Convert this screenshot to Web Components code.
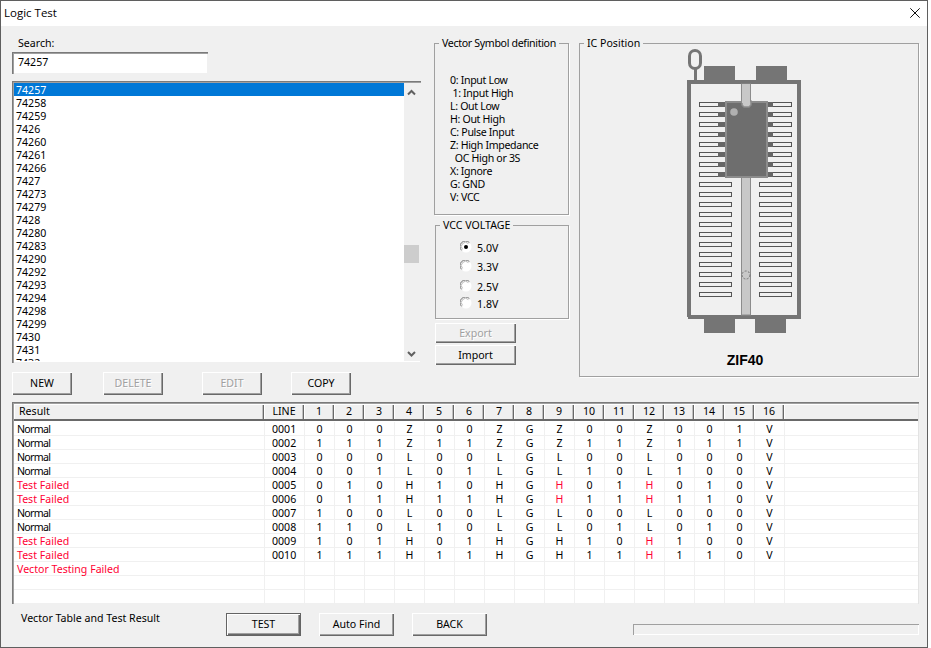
<!DOCTYPE html>
<html lang="en">
<head>
<meta charset="utf-8">
<title>Logic Test</title>
<style>
  html, body { margin: 0; background: #fff; }
  body { font: 10.6px/14px "Noto Sans", "Liberation Sans", Arial, sans-serif; color: #000; }
</style>
</head>
<body>
<logic-window>
  <title-bar slot="title">Logic Test</title-bar>

  <div slot="search">
    <sunken-input label="Search:">74257</sunken-input>
  </div>
  <chip-list slot="list"></chip-list>
  <win-button slot="actions" style="width:60px">NEW</win-button>
  <win-button slot="actions" disabled style="width:60px;margin-left:31px">DELETE</win-button>
  <win-button slot="actions" disabled style="width:60px;margin-left:39px">EDIT</win-button>
  <win-button slot="actions" style="width:60px;margin-left:29px">COPY</win-button>

  <group-box slot="middle" label="Vector Symbol definition" style="height:179px;letter-spacing:-.33px">
    <symbol-list>
      <div>0: Input Low</div>
      <div> 1: Input High</div>
      <div>L: Out Low</div>
      <div>H: Out High</div>
      <div>C: Pulse Input</div>
      <div>Z: High Impedance</div>
      <div>  OC High or 3S</div>
      <div>X: Ignore</div>
      <div>G: GND</div>
      <div>V: VCC</div>
    </symbol-list>
  </group-box>
  <group-box slot="middle" label="VCC VOLTAGE" style="width:134px;height:101px;margin:3px 0 0 1px">
    <radio-option checked style="margin-top:9px">5.0V</radio-option>
    <radio-option style="margin-top:5px">3.3V</radio-option>
    <radio-option style="margin-top:6px">2.5V</radio-option>
    <radio-option style="margin-top:3px">1.8V</radio-option>
  </group-box>
  <win-button slot="middle" disabled style="width:81px;height:20px;padding-bottom:1px;margin:4px 0 0 1px">Export</win-button>
  <win-button slot="middle" style="width:81px;height:20px;padding-bottom:1px;margin:2px 0 0 1px">Import</win-button>

  <group-box slot="position" label="IC Position" style="width:340px;height:341px">
    <zif-socket>ZIF40</zif-socket>
  </group-box>

  <vector-table slot="table"></vector-table>

  <span slot="caption">Vector Table and Test Result</span>
  <win-button slot="commands" default style="width:75px">TEST</win-button>
  <win-button slot="commands" style="width:75px;margin-left:18px">Auto Find</win-button>
  <win-button slot="commands" style="width:75px;margin-left:18px">BACK</win-button>
  <progress-strip slot="progress"></progress-strip>
</logic-window>

<script>
// every element gets an open shadow root filled from one template
function makeTemplate(html) {
  const tmpl = document.createElement("template");
  tmpl.innerHTML = html;
  return tmpl;
}

class ShadowElement extends HTMLElement {
  constructor(tmpl) {
    super();
    this.attachShadow({ mode: "open" });
    this.shadowRoot.appendChild(tmpl.content.cloneNode(true));
  }
}

const windowTmpl = makeTemplate(`
  <style>
    :host { display: flex; flex-direction: column; box-sizing: border-box; width: 928px; height: 648px;
      background: #f0f0f0; border: 1px solid #5f5f5f; overflow: hidden; }
    .top { display: grid; grid-template-columns: 409px 135px 340px; column-gap: 13px; padding: 10px 0 0 11px; }
    .top > div:nth-child(3) { margin-left: -3px; }
    .left, .middle { display: flex; flex-direction: column; align-items: flex-start; }
    .actions { display: flex; margin-top: 9px; }
    .table { margin: 7px 0 0 11px; }
    .footer { display: flex; align-items: flex-start; padding: 9px 0 0 20px; }
    .caption { display: block; width: 205px; margin-top: -2px; }
    .commands { display: flex; }
    .progress { display: block; margin: 11px 0 0 146px; }
  </style>
  <slot name="title"></slot>
  <div class="top">
    <div class="left">
      <slot name="search"></slot>
      <slot name="list"></slot>
      <div class="actions"><slot name="actions"></slot></div>
    </div>
    <div class="middle"><slot name="middle"></slot></div>
    <div><slot name="position"></slot></div>
  </div>
  <div class="table"><slot name="table"></slot></div>
  <div class="footer">
    <div class="caption"><slot name="caption"></slot></div>
    <div class="commands"><slot name="commands"></slot></div>
    <div class="progress"><slot name="progress"></slot></div>
  </div>
`);
class LogicWindow extends ShadowElement {
  constructor() { super(windowTmpl); }
}

const titleTmpl = makeTemplate(`
  <style>
    :host { display: flex; align-items: center; justify-content: space-between; box-sizing: border-box; height: 25px;
      background: #fff; padding: 0 7px 2px 3px; font: 11.5px "Open Sans", sans-serif; }
    svg { width: 10px; height: 10px; display: block; }
  </style>
  <span><slot></slot></span>
  <svg viewBox="0 0 10 10" aria-hidden="true"><path d="M.3 .3l9.4 9.4M9.7 .3l-9.4 9.4" stroke="#111" fill="none"/></svg>
`);
class TitleBar extends ShadowElement {
  constructor() { super(titleTmpl); }
}

const buttonTmpl = makeTemplate(`
  <style>
    :host { display: flex; align-items: center; justify-content: center; box-sizing: border-box; height: 23px;
      padding-bottom: 2px; background: #f0f0f0;
      box-shadow: inset 1px 1px #fff, inset -1px -1px #696969, inset -2px -2px #a0a0a0; }
    :host([disabled]) { color: #a0a0a0; text-shadow: 1px 1px #fff; }
    :host([default]) { border: 1px solid #646464; }
  </style>
  <slot></slot>
`);
class WinButton extends ShadowElement {
  constructor() { super(buttonTmpl); }
}

const inputTmpl = makeTemplate(`
  <style>
    :host { display: block; }
    .label { padding-left: 6px; height: 14px; margin-bottom: 2px; }
    .field { box-sizing: border-box; width: 196px; height: 22px; padding: 3px 6px; background: #fff;
      box-shadow: inset 1px 1px #7a7a7a, inset 2px 2px #a0a0a0, inset -1px -1px #f0f0f0; }
  </style>
  <div class="label"></div>
  <div class="field"><slot></slot></div>
`);
class SunkenInput extends ShadowElement {
  constructor() { super(inputTmpl); }
  connectedCallback() {
    this.shadowRoot.querySelector(".label").textContent = this.getAttribute("label");
  }
}

const listTmpl = makeTemplate(`
  <style>
    :host { display: flex; box-sizing: border-box; width: 409px; height: 282px; margin-top: 7px;
      padding: 2px 1px 2px 2px; background: #fff; overflow: hidden;
      box-shadow: inset 1px 1px #7a7a7a, inset 2px 2px #a0a0a0, inset -1px -1px #f0f0f0; }
    .items { flex: 1; overflow: hidden; min-width: 0; }
    .item { height: 13px; line-height: 15px; padding-left: 2px; }
    .item.selected { background: #0078d7; color: #fff; }
    .bar { display: flex; flex-direction: column; flex: none; width: 16px; background: #f0f0f0; }
    .bar svg { display: block; width: 16px; height: 17px; flex: none; }
    .thumb { flex: none; height: 18px; width: 15px; margin-top: 145px; background: #cdcdcd; }
    .grow { flex: 1; }
  </style>
  <div class="items"></div>
  <div class="bar">
    <svg viewBox="0 0 16 17" aria-hidden="true"><path d="M4 11.5l3.5-3.5 3.5 3.5" fill="none" stroke="#606060" stroke-width="2"/></svg>
    <div class="thumb"></div>
    <div class="grow"></div>
    <svg viewBox="0 0 16 17" aria-hidden="true"><path d="M4 8l3.5 3.5 3.5-3.5" fill="none" stroke="#606060" stroke-width="2"/></svg>
  </div>
`);
const CHIPS = ["74257", "74258", "74259", "7426", "74260", "74261", "74266", "7427", "74273", "74279", "7428",
  "74280", "74283", "74290", "74292", "74293", "74294", "74298", "74299", "7430", "7431", "7432"];
class ChipList extends ShadowElement {
  constructor() {
    super(listTmpl);
    const box = this.shadowRoot.querySelector(".items");
    CHIPS.forEach((name, i) => {
      const item = document.createElement("div");
      item.className = i === 0 ? "item selected" : "item";
      item.textContent = name;
      box.appendChild(item);
    });
  }
}

const groupTmpl = makeTemplate(`
  <style>
    :host { display: block; box-sizing: border-box; width: 135px; }
    fieldset { box-sizing: border-box; height: 100%; margin: 0; padding: 0; min-width: 0;
      border: 1px solid #a0a0a0; box-shadow: 1px 1px #fff; }
    legend { margin-left: 4px; padding: 0 3px; height: 14px; line-height: 14px; white-space: nowrap; }
  </style>
  <fieldset><legend></legend><slot></slot></fieldset>
`);
class GroupBox extends ShadowElement {
  constructor() { super(groupTmpl); }
  connectedCallback() {
    this.shadowRoot.querySelector("legend").textContent = this.getAttribute("label");
  }
}

const symbolsTmpl = makeTemplate(`
  <style>
    :host { display: block; padding: 24px 0 0 15px; line-height: 13px; }
    ::slotted(div) { white-space: pre; height: 13px; }
  </style>
  <slot></slot>
`);
class SymbolList extends ShadowElement {
  constructor() { super(symbolsTmpl); }
}

const radioTmpl = makeTemplate(`
  <style>
    :host { display: flex; align-items: flex-start; height: 14px; padding-left: 24px; }
    svg { display: block; width: 12px; height: 12px; margin-right: 5px; }
    .dot { visibility: hidden; }
    :host([checked]) .dot { visibility: visible; }
  </style>
  <svg viewBox="0 0 12 12" aria-hidden="true">
    <circle cx="6" cy="6" r="5.5" fill="#fff"/>
    <path d="M1.6 9.4A5.5 5.5 0 0 1 9.4 1.6" fill="none" stroke="#777"/>
    <path d="M2.6 8.4A4 4 0 0 1 8.4 2.6" fill="none" stroke="#bbb"/>
    <circle class="dot" cx="6" cy="6" r="2" fill="#000"/>
  </svg>
  <span><slot></slot></span>
`);
class RadioOption extends ShadowElement {
  constructor() { super(radioTmpl); }
}

const socketTmpl = makeTemplate(`
  <style>
    :host { display: block; margin: -2px 0 0 100px; width: 130px; }
    svg { display: block; width: 130px; height: 286px; }
    .name { margin-top: 19px; text-align: center; font: bold 14px/14px "Liberation Sans", sans-serif; }
  </style>
  <svg viewBox="680 48 130 286" aria-hidden="true"></svg>
  <div class="name"><slot></slot></div>
`);
class ZifSocket extends ShadowElement {
  constructor() {
    super(socketTmpl);
    let slots = "";
    for (let i = 0; i < 20; i += 1) {
      const y = 102.5 + i * 10;
      slots += `<rect x="699.5" y="${y}" width="32" height="4" fill="#f0f0f0" stroke="#555"/>`;
      slots += `<rect x="759.5" y="${y}" width="32" height="4" fill="#f0f0f0" stroke="#555"/>`;
      if (i < 8) {
        slots += `<rect x="718" y="${y - 0.5}" width="8" height="5" fill="#666"/>`;
        slots += `<rect x="766" y="${y - 0.5}" width="7" height="5" fill="#666"/>`;
      }
    }
    this.shadowRoot.querySelector("svg").innerHTML = `
      <rect x="689.5" y="50.5" width="11" height="18" rx="5.5" fill="none" stroke="#757575" stroke-width="3"/>
      <rect x="694" y="69" width="3" height="12" fill="#757575"/>
      <rect x="704" y="66" width="31" height="15" fill="#757575"/>
      <rect x="756" y="66" width="31" height="15" fill="#757575"/>
      <rect x="704" y="319" width="31" height="14" fill="#757575"/>
      <rect x="755" y="319" width="31" height="14" fill="#757575"/>
      <path d="M689 317V82H799V317M688 317H801" fill="none" stroke="#757575" stroke-width="4"/>
      <rect x="741.5" y="84" width="9" height="231" fill="#c8c8c8" stroke="#8c8c8c"/>
      ${slots}
      <rect x="726" y="102" width="41" height="75" fill="#6e6e6e" stroke="#8c8c8c" stroke-width="2"/>
      <path d="M742 101V105L744 107H749L751 105V101Z" fill="#c8c8c8" stroke="#8c8c8c" stroke-width="1.5"/>
      <rect x="742" y="84" width="8" height="19" fill="#c8c8c8"/>
      <circle cx="734" cy="112" r="3.8" fill="#b0b0b0"/>
      <circle cx="746" cy="275" r="4" fill="none" stroke="#777" stroke-dasharray="2 1.4"/>
    `;
  }
}

const tableTmpl = makeTemplate(`
  <style>
    :host { display: block; box-sizing: border-box; width: 907px; height: 202px; overflow: hidden; background: #fff;
      box-shadow: inset 1px 1px #7a7a7a, inset 2px 2px #a0a0a0, inset -1px -1px #e3e3e3; padding: 2px 1px 1px 2px; }
    .grid { display: grid; grid-template-columns: 250px 40px repeat(16, 30px) 1fr; grid-template-rows: 17px 1px; grid-auto-rows: 14px; }
    .head { height: 17px; line-height: 15px; text-align: center; background: #f0f0f0; box-sizing: border-box;
      border-bottom: 2px solid #696969; box-shadow: inset 1px 1px #fff, inset -1px 0 #696969, inset -2px 0 #c0c0c0; }
    .head.result { text-align: left; padding-left: 5px; }
    .head.rest { box-shadow: inset 1px 1px #fff; }
    .cell { box-sizing: border-box; line-height: 14px; text-align: center; border-left: 1px solid #f0f0f0;
      border-bottom: 1px solid #f0f0f0; }
    .cell.result { text-align: left; padding-left: 3px; border-left: 0; }
    .cell.line { text-align: left; padding-left: 7px; }
    .normal { letter-spacing: -.7px; }
    .bad { color: #ff0033; }
    .gap { grid-column: 1 / -1; height: 1px; }
  </style>
  <div class="grid"></div>
`);
const VECTORS = [
  ["Normal", "000Z00ZGZ00Z001V", []],
  ["Normal", "111Z11ZGZ11Z111V", []],
  ["Normal", "000L00LGL00L000V", []],
  ["Normal", "001L01LGL10L100V", []],
  ["Test Failed", "010H10HGH01H010V", [9, 12]],
  ["Test Failed", "011H11HGH11H110V", [9, 12]],
  ["Normal", "100L00LGL00L000V", []],
  ["Normal", "110L10LGL01L010V", []],
  ["Test Failed", "101H01HGH10H100V", [12]],
  ["Test Failed", "111H11HGH11H110V", [12]],
];
class VectorTable extends ShadowElement {
  constructor() {
    super(tableTmpl);
    const grid = this.shadowRoot.querySelector(".grid");
    const add = (cls, text) => {
      const el = document.createElement("div");
      el.className = cls;
      el.textContent = text;
      grid.appendChild(el);
    };
    add("head result", "Result");
    add("head", "LINE");
    for (let c = 1; c <= 16; c += 1) add("head", String(c));
    add("head rest", "");
    add("gap", "");
    for (let r = 0; r < 13; r += 1) {
      const row = VECTORS[r];
      let name = "";
      if (row) name = row[0];
      if (r === 10) name = "Vector Testing Failed";
      const failed = name.indexOf("Failed") !== -1;
      add(failed ? "cell result bad" : "cell result normal", name);
      add("cell line", row ? String(r + 1).padStart(4, "0") : "");
      const pins = row ? row[1] : "";
      for (let c = 1; c <= 16; c += 1) {
        add(row && row[2].includes(c) ? "cell bad" : "cell", pins.charAt(c - 1));
      }
      add("cell", "");
    }
  }
}

const progressTmpl = makeTemplate(`
  <style>
    :host { display: block; box-sizing: border-box; width: 286px; height: 11px; background: #f0f0f0;
      box-shadow: inset 1px 1px #a0a0a0, inset -1px -1px #fff; }
  </style>
`);
class ProgressStrip extends ShadowElement {
  constructor() { super(progressTmpl); }
}

customElements.define("logic-window", LogicWindow);
customElements.define("title-bar", TitleBar);
customElements.define("win-button", WinButton);
customElements.define("sunken-input", SunkenInput);
customElements.define("chip-list", ChipList);
customElements.define("group-box", GroupBox);
customElements.define("symbol-list", SymbolList);
customElements.define("radio-option", RadioOption);
customElements.define("zif-socket", ZifSocket);
customElements.define("vector-table", VectorTable);
customElements.define("progress-strip", ProgressStrip);
</script>
</body>
</html>
